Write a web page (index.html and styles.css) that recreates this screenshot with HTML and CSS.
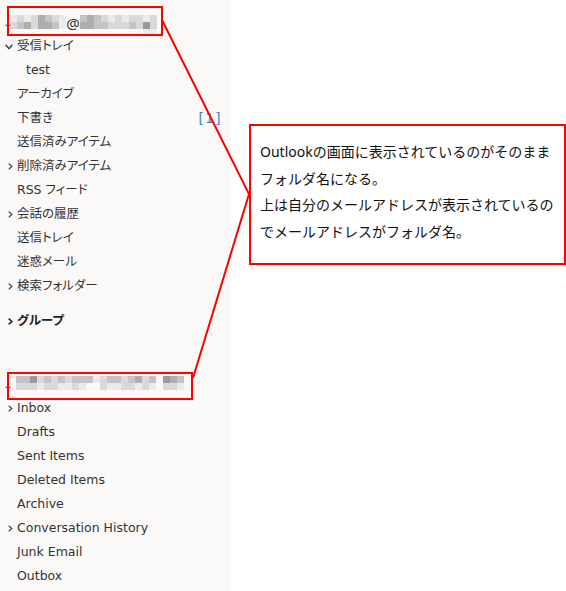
FILE: index.html
```html
<!DOCTYPE html>
<html lang="ja">
<head>
<meta charset="utf-8">
<title>Outlook folders</title>
<link rel="stylesheet" href="styles.css">
</head>
<body>
<div class="page">
  <nav class="sidebar">
    <div class="row account">
      <span class="chev down small"><svg viewBox="0 0 8 6" width="6" height="4"><path d="M0.5 0.8 L4 4.6 L7.5 0.8" /></svg></span>
      <span class="blob blob1">
        <span class="grid cols8">
          <i class="g1"></i><i class="g2"></i><i class="g1"></i><i class="g2"></i><i class="g4"></i><i class="g3"></i><i class="g2"></i><i class="g1"></i>
          <i class="g2"></i><i class="g3"></i><i class="g4"></i><i class="g2"></i><i class="g4"></i><i class="g4"></i><i class="g3"></i><i class="g1"></i>
        </span>
        <span class="at">@</span>
        <span class="grid cols11">
          <i class="g3"></i><i class="g4"></i><i class="g3"></i><i class="g2"></i><i class="g1"></i><i class="g2"></i><i class="g1"></i><i class="g2"></i><i class="g2"></i><i class="g1"></i><i class="g2"></i>
          <i class="g4"></i><i class="g4"></i><i class="g3"></i><i class="g3"></i><i class="g2"></i><i class="g2"></i><i class="g2"></i><i class="g3"></i><i class="g2"></i><i class="g5"></i><i class="g2"></i>
          <i class="g0"></i><i class="g0"></i><i class="g0"></i><i class="g0"></i><i class="g0"></i><i class="g0"></i><i class="g0"></i><i class="g0"></i><i class="g0"></i><i class="g1"></i><i class="g1"></i>
        </span>
      </span>
    </div>
    <div class="row"><span class="chev down"><svg viewBox="0 0 8 6" width="8" height="6"><path d="M0.6 0.8 L4 4.6 L7.4 0.8" /></svg></span><span class="label">受信トレイ</span></div>
    <div class="row sub"><span class="label">test</span></div>
    <div class="row"><span class="label">アーカイブ</span></div>
    <div class="row"><span class="label">下書き</span><span class="count">[1]</span></div>
    <div class="row"><span class="label">送信済みアイテム</span></div>
    <div class="row"><span class="chev right"><svg viewBox="0 0 6 8" width="5" height="7"><path d="M0.8 0.5 L4.6 4 L0.8 7.5" /></svg></span><span class="label">削除済みアイテム</span></div>
    <div class="row"><span class="label">RSS フィード</span></div>
    <div class="row"><span class="chev right"><svg viewBox="0 0 6 8" width="5" height="7"><path d="M0.8 0.5 L4.6 4 L0.8 7.5" /></svg></span><span class="label">会話の履歴</span></div>
    <div class="row"><span class="label">送信トレイ</span></div>
    <div class="row"><span class="label">迷惑メール</span></div>
    <div class="row"><span class="chev right"><svg viewBox="0 0 6 8" width="5" height="7"><path d="M0.8 0.5 L4.6 4 L0.8 7.5" /></svg></span><span class="label">検索フォルダー</span></div>

    <div class="row group"><span class="chev right bold"><svg viewBox="0 0 6 8" width="5" height="7"><path d="M0.8 0.5 L4.6 4 L0.8 7.5" /></svg></span><span class="label">グループ</span></div>

    <div class="row account account2">
      <span class="chev down small"><svg viewBox="0 0 8 6" width="6" height="4"><path d="M0.5 0.8 L4 4.6 L7.5 0.8" /></svg></span>
      <span class="blob blob2">
        <span class="grid cols24">
          <i class="g3"></i><i class="g3"></i><i class="g5"></i><i class="g2"></i><i class="g3"></i><i class="g2"></i><i class="g3"></i><i class="g2"></i><i class="g3"></i><i class="g3"></i><i class="g3"></i><i class="g1"></i><i class="g2"></i><i class="g3"></i><i class="g3"></i><i class="g2"></i><i class="g3"></i><i class="g4"></i><i class="g2"></i><i class="g3"></i><i class="g0"></i><i class="g5"></i><i class="g4"></i><i class="g3"></i>
          <i class="g2"></i><i class="g2"></i><i class="g2"></i><i class="g1"></i><i class="g2"></i><i class="g2"></i><i class="g1"></i><i class="g1"></i><i class="g2"></i><i class="g1"></i><i class="g0"></i><i class="g0"></i><i class="g2"></i><i class="g1"></i><i class="g1"></i><i class="g2"></i><i class="g2"></i><i class="g1"></i><i class="g2"></i><i class="g1"></i><i class="g0"></i><i class="g2"></i><i class="g2"></i><i class="g1"></i>
        </span>
      </span>
    </div>
    <div class="row"><span class="chev right"><svg viewBox="0 0 6 8" width="5" height="7"><path d="M0.8 0.5 L4.6 4 L0.8 7.5" /></svg></span><span class="label">Inbox</span></div>
    <div class="row"><span class="label">Drafts</span></div>
    <div class="row"><span class="label">Sent Items</span></div>
    <div class="row"><span class="label">Deleted Items</span></div>
    <div class="row"><span class="label">Archive</span></div>
    <div class="row"><span class="chev right"><svg viewBox="0 0 6 8" width="5" height="7"><path d="M0.8 0.5 L4.6 4 L0.8 7.5" /></svg></span><span class="label">Conversation History</span></div>
    <div class="row"><span class="label">Junk Email</span></div>
    <div class="row"><span class="label">Outbox</span></div>
  </nav>

  <main class="main">
    <div class="callout">
      <p>Outlookの画面に表示されているのがそのまま<br>フォルダ名になる。<br>上は自分のメールアドレスが表示されているの<br>でメールアドレスがフォルダ名。</p>
    </div>
  </main>

  <svg class="annot" width="566" height="591" viewBox="0 0 566 591">
    <rect x="8" y="7" width="154" height="28" />
    <rect x="8" y="373" width="184" height="26" />
    <polyline points="162,20 249,194 193,378" />
  </svg>
</div>
</body>
</html>
```

FILE: styles.css
```css
html, body {
  margin: 0;
  padding: 0;
  background: #ffffff;
}

.page {
  position: relative;
  display: flex;
  width: 566px;
  height: 591px;
  overflow: hidden;
  font-family: "DejaVu Sans", "Noto Sans CJK JP", sans-serif;
}

.sidebar {
  width: 231px;
  flex: none;
  background: #faf9f8;
  padding-top: 10px;
  box-sizing: border-box;
  color: #333333;
  font-size: 12.5px;
  font-feature-settings: "palt" 1;
}

.row {
  position: relative;
  height: 24px;
  display: flex;
  align-items: center;
  padding-left: 17px;
  white-space: nowrap;
}

.row.sub {
  padding-left: 26px;
}

.label {
  line-height: 24px;
}

.chev {
  position: absolute;
  left: 8px;
  top: 0;
  height: 24px;
  display: flex;
  align-items: center;
}

.chev.down {
  left: 5px;
  padding-top: 1px;
}

.chev.small {
  padding-top: 4px;
}

.chev svg path {
  fill: none;
  stroke: #3a3a3a;
  stroke-width: 1.4;
}

.chev.bold svg path {
  stroke: #222222;
  stroke-width: 1.9;
}

.count {
  margin-left: auto;
  margin-right: 9px;
  color: #3f7bc8;
  font-size: 13.5px;
  letter-spacing: 1.5px;
}

.group {
  margin-top: 11px;
  font-weight: bold;
  color: #222222;
}

.account2 {
  margin-top: 39px;
}

.blob {
  display: flex;
  align-items: flex-start;
}

.blob1 {
  margin-left: -7px;
  padding-top: 5px;
  height: 24px;
  box-sizing: border-box;
}

.blob2 {
  margin-left: -1px;
  padding-top: 4px;
  height: 24px;
  box-sizing: border-box;
}

.grid {
  display: grid;
  grid-auto-rows: 7px;
}

.cols8 {
  grid-template-columns: repeat(8, 7px);
}

.cols11 {
  grid-template-columns: repeat(11, 7px);
}

.cols24 {
  grid-template-columns: repeat(24, 7px);
}

.grid i {
  display: block;
}

.g0 { background: transparent; }
.g1 { background: #ebebeb; }
.g2 { background: #d9d9d9; }
.g3 { background: #c4c4c4; }
.g4 { background: #aeaeae; }
.g5 { background: #9a9a9a; }

.at {
  font-family: "Noto Sans", sans-serif;
  font-size: 15px;
  line-height: 14px;
  color: #333333;
  width: 14px;
  text-align: center;
  margin-top: 1px;
}

.main {
  flex: 1;
  padding-top: 124px;
  padding-left: 18px;
}

.callout {
  width: 317px;
  height: 141px;
  box-sizing: border-box;
  border: 2px solid #ff0000;
  padding: 13px 0 0 9px;
  color: #111111;
  font-size: 14px;
}

.callout p {
  margin: 0;
  line-height: 26.5px;
  font-family: "Noto Sans", "Noto Sans CJK JP", sans-serif;
}

.annot {
  position: absolute;
  left: 0;
  top: 0;
  pointer-events: none;
}

.annot rect,
.annot polyline {
  fill: none;
  stroke: #ff0000;
  stroke-width: 2;
}
```
